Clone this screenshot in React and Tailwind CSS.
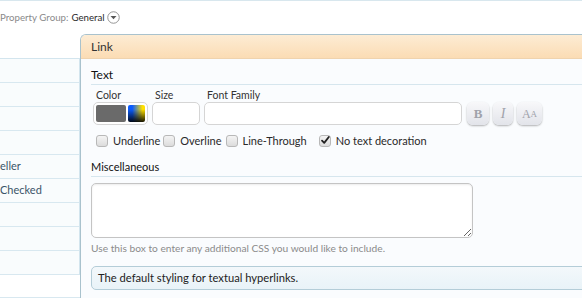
import React from "react";

function Checkbox({ checked }) {
  return (
    <span className="relative inline-block w-[12px] h-[12px] rounded-[3px] border border-[#b8b8b8] bg-gradient-to-b from-[#f4f4f4] to-[#dcdcdc] shrink-0">
      {checked && (
        <svg viewBox="0 0 12 12" className="absolute left-[0px] top-[-1px] w-[11px] h-[11px]">
          <path d="M2.2 6.2 L4.6 8.6 L9.6 2.2" stroke="#222" strokeWidth="2" fill="none" strokeLinecap="round" strokeLinejoin="round" />
        </svg>
      )}
    </span>
  );
}

function Check({ label, checked, className }) {
  return (
    <div className={"flex items-center gap-[5px] " + (className || "")}>
      <Checkbox checked={checked} />
      <span className="text-[11px] leading-[13px] text-[#2a2a2a]">{label}</span>
    </div>
  );
}

export default function App() {
  const rows = ["", "", "", "", "eller", "Checked", "", "", ""];
  return (
    <div className="w-[582px] h-[300px] overflow-hidden bg-white border-t border-[#d8e7ee] font-['Lato',sans-serif]">
      <div className="h-[33px] flex items-center text-[9.7px]">
        <span className="text-[#8a8a8a]">Property Group:</span>
        <span className="ml-[3px] text-[#2a2a2a]">General</span>
        <svg viewBox="0 0 14 14" className="ml-[2px] w-[13px] h-[13px]">
          <circle cx="7" cy="7" r="6.2" fill="#fff" stroke="#8c8c8c" strokeWidth="1" />
          <path d="M3.8 5.4 L10.2 5.4 L7 9 Z" fill="#555" />
        </svg>
      </div>
      <div className="flex">
        <div className="w-[80px] shrink-0 pt-[24px]">
          <div className="border-t border-r border-[#d3e5ee]">
            {rows.map((r, i) => (
              <div key={i} className="h-[24px] border-b border-[#d8e8f0] bg-[#f9fcfd] flex items-center text-[11px] text-[#3b5568] whitespace-nowrap">
                {r}
              </div>
            ))}
          </div>
          <div className="mt-[22px] border-t border-[#d8e8f0]" />
        </div>
        <div className="w-[540px] shrink-0 border-l border-t border-[#a9c2cd] rounded-tl-[6px] overflow-hidden bg-[#fafcfe]">
          <div className="h-[24px] bg-gradient-to-b from-[#fdecd4] to-[#fbdcb4] border-b border-[#efd3ae] flex items-center pl-[10px] text-[12px] text-[#333]">
            Link
          </div>
          <div className="pl-[10px]">
            <div className="mt-[8px] text-[12px] leading-[16px] pb-[1px] border-b border-[#d6e6ee] text-[#111]">Text</div>
            <div className="mt-[4px] flex items-end">
              <div className="ml-[2px] flex flex-col">
                <span className="pl-[3px] text-[10.5px] leading-[13px] text-[#333]">Color</span>
                <div className="w-[55px] h-[23px] rounded-[5px] border border-[#d5d5d5] bg-white flex items-center gap-[2px] px-[2px]">
                  <div className="w-[30px] h-[17px] rounded-[2px] bg-[#6a6a6a]" />
                  <div className="w-[17px] h-[17px] rounded-[2px] bg-[linear-gradient(to_bottom,transparent_25%,rgba(0,0,0,0.9)),linear-gradient(to_right,#0a5cff_25%,#ffe000_85%)]" />
                </div>
              </div>
              <div className="ml-[4px] flex flex-col">
                <span className="pl-[3px] text-[10.5px] leading-[13px] text-[#333]">Size</span>
                <div className="w-[48px] h-[23px] rounded-[5px] border border-[#d5d5d5] bg-white" />
              </div>
              <div className="ml-[4px] flex flex-col">
                <span className="pl-[3px] text-[10.5px] leading-[13px] text-[#333]">Font Family</span>
                <div className="w-[258px] h-[23px] rounded-[5px] border border-[#d5d5d5] bg-white" />
              </div>
              <div className="ml-[5px] w-[22px] h-[23px] rounded-[6px] bg-gradient-to-b from-[#f8f8fa] to-[#e2e4ea] shadow-[0_1px_2px_rgba(0,0,0,0.3)] flex items-center justify-center font-['Liberation_Serif',serif] font-bold text-[13px] text-[#a0a2aa]">B</div>
              <div className="ml-[4px] w-[20px] h-[23px] rounded-[6px] bg-gradient-to-b from-[#f8f8fa] to-[#e2e4ea] shadow-[0_1px_2px_rgba(0,0,0,0.3)] flex items-center justify-center font-['Liberation_Serif',serif] italic text-[14px] text-[#a0a2aa]">I</div>
              <div className="ml-[4px] w-[25px] h-[23px] rounded-[6px] bg-gradient-to-b from-[#f8f8fa] to-[#e2e4ea] shadow-[0_1px_2px_rgba(0,0,0,0.3)] flex items-center justify-center font-['Liberation_Serif',serif] text-[#a0a2aa]">
                <span className="text-[12px]">A</span><span className="text-[9px] mt-[2px]">A</span>
              </div>
            </div>
            <div className="mt-[9px] flex items-center h-[13px]">
              <Check label="Underline" className="ml-[5px]" />
              <Check label="Overline" className="ml-[3px]" />
              <Check label="Line-Through" className="ml-[4px]" />
              <Check label="No text decoration" checked className="ml-[12px]" />
            </div>
            <div className="mt-[12px] text-[11px] leading-[16px] pb-[1px] border-b border-[#d6e6ee] text-[#111]">Miscellaneous</div>
            <textarea
              readOnly
              className="block mt-[6px] w-[382px] h-[55px] rounded-[5px] border border-[#c4c4c4] bg-white outline-none shadow-[inset_0_1px_2px_rgba(0,0,0,0.08)]"
            />
            <div className="mt-[4px] text-[10.2px] leading-[13px] text-[#8b8b8b]">Use this box to enter any additional CSS you would like to include.</div>
            <div className="mt-[11px] h-[24px] rounded-[5px] border border-[#b4cdd8] bg-gradient-to-b from-[#f3f8fb] to-[#e9f3f8] flex items-center pl-[6px] text-[11.2px] text-[#222]">
              The default styling for textual hyperlinks.
            </div>
          </div>
        </div>
      </div>
    </div>
  );
}
